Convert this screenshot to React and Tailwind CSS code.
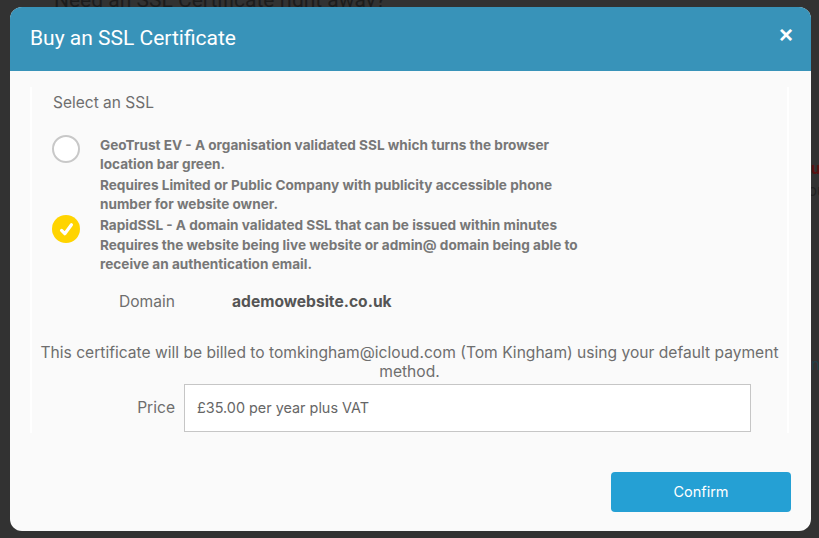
export default function App() {
  return (
    <div className="relative w-[819px] h-[538px] overflow-hidden bg-[#323232]" style={{ fontFamily: "Inter, 'Noto Sans', sans-serif" }}>
      {/* dimmed page content behind overlay */}
      <div className="absolute left-[54px] top-[-15px] text-[21px] text-[#1c1c1c] whitespace-nowrap" style={{ fontFamily: "Roboto, sans-serif" }}>
        Need an SSL Certificate right away?
      </div>
      <div className="absolute left-[811px] top-[158px] text-[15px] font-bold text-[#5a1010]">u</div>
      <div className="absolute left-[808px] top-[180px] text-[15px] text-[#222]">ou</div>
      <div className="absolute left-[811px] top-[354px] text-[15px] text-[#1f3f4a]">n</div>
      <div className="absolute left-[115px] top-[531px] text-[15px] text-[#1c1c1c] whitespace-nowrap">
        aaaaa aaaa aaaaaa aaaaa aaaaa aaaaaa aaaaa aaaa aaaaaa aaaaaa
      </div>

      {/* modal */}
      <div className="absolute left-[10px] top-[7px] w-[801px] h-[524px] rounded-[12px] bg-[#fafafa] overflow-hidden flex flex-col">
        <div className="h-[64px] shrink-0 bg-[#3893b9] flex items-center justify-between pl-[20px] pr-[18px]">
          <div className="text-white text-[21px] leading-none pb-[1px]" style={{ fontFamily: "Roboto, sans-serif" }}>
            Buy an SSL Certificate
          </div>
          <div className="text-white text-[24px] font-bold leading-none mt-[-8px]" style={{ fontFamily: "'Liberation Sans', Arial, sans-serif" }}>
            ×
          </div>
        </div>

        <div className="px-[20px] pt-[16px]">
          <div className="w-[759px] h-[346px] border-x-2 border-white px-[9px] overflow-hidden">
            <div className="pl-[12px] pt-[6px] text-[15.5px] leading-[20px] text-[#6e6e6e]">Select an SSL</div>

            <div className="pl-[11px] mt-[23px] flex flex-col gap-[2px]">
              <div className="flex items-start gap-[20px]">
                <div className="w-[28px] h-[28px] rounded-full border-2 border-[#c8c8c8] bg-white mt-[-1px] shrink-0" />
                <div className="w-[490px] text-[13.6px] font-bold leading-[19px] text-[#777]">
                  <div>GeoTrust EV - A organisation validated SSL which turns the browser location bar green.</div>
                  <div className="mt-[2px]">Requires Limited or Public Company with publicity accessible phone number for website owner.</div>
                </div>
              </div>
              <div className="flex items-start gap-[20px]">
                <div className="w-[28px] h-[28px] rounded-full bg-[#ffd400] mt-[-1px] shrink-0 flex items-center justify-center">
                  <svg width="15" height="15" viewBox="0 0 14 14">
                    <path d="M2.4 7.8 L5.4 10.9 L11.6 2.6" fill="none" stroke="white" strokeWidth="3" strokeLinecap="round" strokeLinejoin="round" />
                  </svg>
                </div>
                <div className="w-[500px] text-[13.6px] font-bold leading-[19.5px] text-[#777]">
                  <div>RapidSSL - A domain validated SSL that can be issued within minutes</div>
                  <div>Requires the website being live website or admin@ domain being able to receive an authentication email.</div>
                </div>
              </div>
            </div>

            <div className="mt-[17px] flex items-center text-[15.6px] leading-[20px]">
              <div className="w-[134px] text-right text-[#6e6e6e]">Domain</div>
              <div className="ml-[57px] font-bold text-[#555]">ademowebsite.co.uk</div>
            </div>

            <div className="mt-[31px] -mx-[2px] text-center text-[15.6px] leading-[19px] text-[#6e6e6e]">
              This certificate will be billed to tomkingham@icloud.com (Tom Kingham) using your default payment method.
            </div>

            <div className="mt-[3px] flex items-center">
              <div className="w-[134px] text-right text-[15.6px] text-[#6e6e6e]">Price</div>
              <div className="ml-[9px] w-[567px] h-[48px] border border-[#c6c6c6] bg-white flex items-center pl-[12px] text-[14.4px] text-[#666]">
                £35.00 per year plus VAT
              </div>
            </div>
          </div>
        </div>

        <div className="flex justify-end pr-[20px] pt-[39px]">
          <button className="w-[180px] h-[40px] rounded-[4px] bg-[#25a0d4] text-white text-[14.5px]">Confirm</button>
        </div>
      </div>
    </div>
  );
}
